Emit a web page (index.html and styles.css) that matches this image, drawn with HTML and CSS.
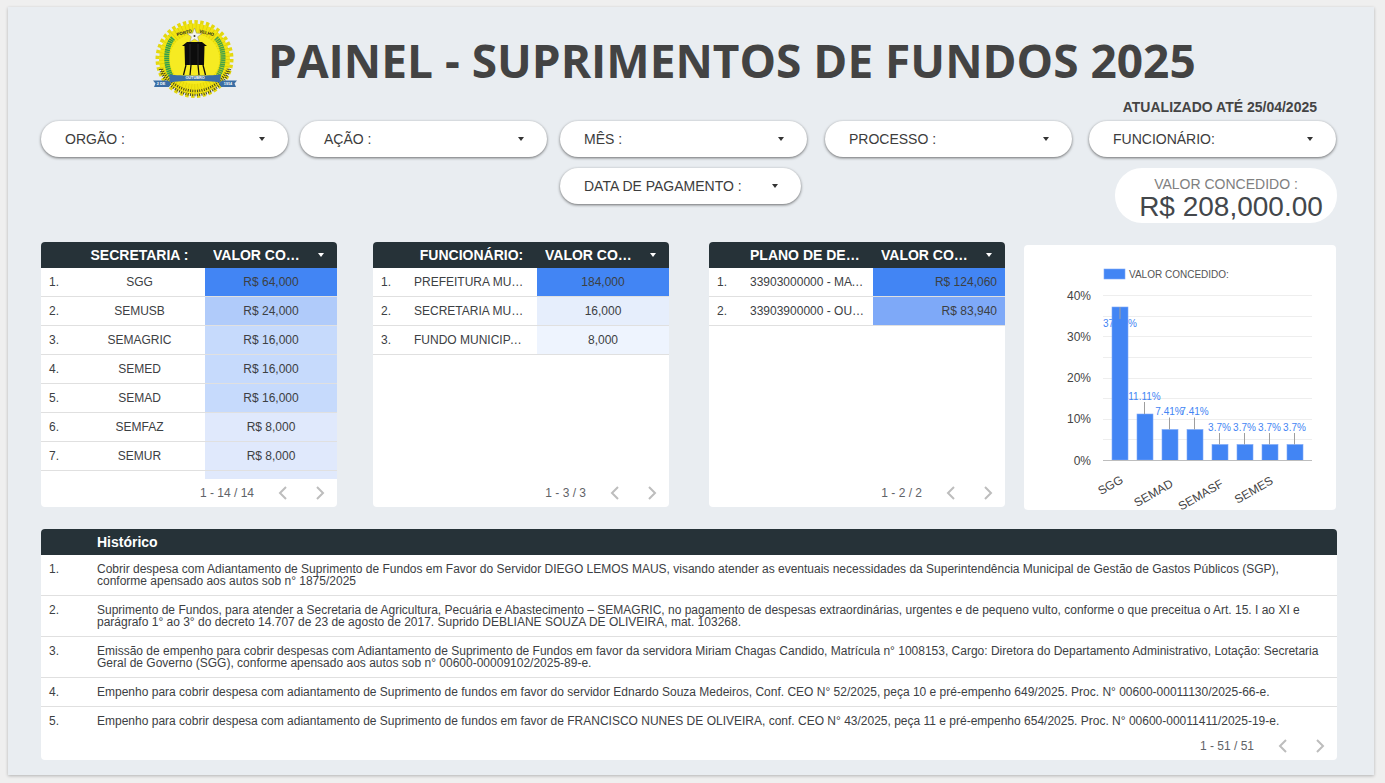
FILE: index.html
```html
<!DOCTYPE html>
<html lang="pt-BR">
<head>
<meta charset="utf-8">
<title>Painel - Suprimentos de Fundos 2025</title>
<link rel="stylesheet" href="styles.css">
</head>
<body>
<main class="canvas">
  <header class="masthead">
    <svg class="logo" viewBox="0 0 84 80" role="img" aria-label="Brasão de Porto Velho">
      <circle cx="41.5" cy="40" r="37" fill="none" stroke="#e4d80f" stroke-width="4" stroke-dasharray="3.4 2.4"/>
      <circle cx="41.5" cy="40" r="35.5" fill="#f2e511"/>
      <circle cx="41.5" cy="40" r="29" fill="none" stroke="#d9cc0c" stroke-width="13" stroke-dasharray="0.6 2.6"/>
      <circle cx="41.5" cy="40" r="25" fill="#f6eb22"/>
      <path class="wreath" d="M20 19 C12 28 12 46 18 57"/>
      <path class="wreath wreath-right" d="M63 19 C72 28 72 46 65 57"/>
      <path class="rails" d="M7 50 C13 67 28 76 42 76 C56 76 71 67 77 50"/>
      <path class="rails" d="M9 50 C15 63 28 72 42 72 C56 72 69 63 75 50"/>
      <text class="logo-arc" transform="translate(24 17) rotate(-14)">PORTO</text>
      <text class="logo-arc" transform="translate(46 13.5) rotate(14)">VELHO</text>
      <path d="M41.5 9 L43.4 14.2 L49 14.4 L44.6 17.8 L46.2 23 L41.5 20 L36.8 23 L38.4 17.8 L34 14.4 L39.6 14.2 Z" fill="#f4f4ee" stroke="#777" stroke-width=".4"/>
      <circle cx="41.5" cy="17" r="1" fill="#333"/>
      <path d="M29 27 L34 23 H49 L54 27 H51.5 L51 46 H32 L31.5 27 Z" fill="#0c0c0c"/>
      <path d="M37 25 V46 M45 25 V46" stroke="#3a3a3a" stroke-width=".6"/>
      <path d="M33 46 L30.5 56 M38 46 L37 56 M45 46 L46 56 M50 46 L52.5 56" stroke="#0c0c0c" stroke-width="1.3"/>
      <path class="ribbon" d="M0 61.500 H15 L18 64 L16 68 H1 L2.500 64.500 Z"/>
      <path class="ribbon" d="M84 61.500 H69 L66 64 L68 68 H83 L81.500 64.500 Z"/>
      <path class="ribbon" d="M16 55.500 C28 57 55 57 68 55.500 L67 63.500 C55 61 28 61 17 63.500 Z"/>
      <text class="logo-band" x="42" y="60">OUTUBRO</text>
      <text class="logo-band" x="8" y="66.200">2 DE</text>
      <text class="logo-band" x="75" y="66.200">1914</text>
    </svg>
    <h1 class="title">PAINEL - SUPRIMENTOS DE FUNDOS 2025</h1>
  </header>

  <p class="updated">ATUALIZADO ATÉ 25/04/2025</p>

  <section class="filters">
    <div class="filter"><span>ORGÃO :</span><i class="caret"></i></div>
    <div class="filter"><span>AÇÃO :</span><i class="caret"></i></div>
    <div class="filter"><span>MÊS :</span><i class="caret"></i></div>
    <div class="filter"><span>PROCESSO :</span><i class="caret"></i></div>
    <div class="filter"><span>FUNCIONÁRIO:</span><i class="caret"></i></div>
    <div class="filter filter-date"><span>DATA DE PAGAMENTO :</span><i class="caret"></i></div>
    <div class="score">
      <div class="score-label">VALOR CONCEDIDO :</div>
      <div class="score-value">R$ 208,000.00</div>
    </div>
  </section>

  <section class="panels">
    <article class="card table-card">
      <div class="row head">
        <div></div><div class="dim center">SECRETARIA :</div>
        <div class="val"><span class="val-title">VALOR CONCEDIDO</span><i class="caret caret-light"></i></div>
      </div>
      <div class="body">
        <div class="row"><div class="rank">1.</div><div class="dim center">SGG</div><div class="val center heat-100">R$ 64,000</div></div>
        <div class="row"><div class="rank">2.</div><div class="dim center">SEMUSB</div><div class="val center heat-38">R$ 24,000</div></div>
        <div class="row"><div class="rank">3.</div><div class="dim center">SEMAGRIC</div><div class="val center heat-25">R$ 16,000</div></div>
        <div class="row"><div class="rank">4.</div><div class="dim center">SEMED</div><div class="val center heat-25">R$ 16,000</div></div>
        <div class="row"><div class="rank">5.</div><div class="dim center">SEMAD</div><div class="val center heat-25">R$ 16,000</div></div>
        <div class="row"><div class="rank">6.</div><div class="dim center">SEMFAZ</div><div class="val center heat-12">R$ 8,000</div></div>
        <div class="row"><div class="rank">7.</div><div class="dim center">SEMUR</div><div class="val center heat-12">R$ 8,000</div></div>
        <div class="row row-clipped"><div class="rank"></div><div class="dim center"></div><div class="val center heat-12"></div></div>
      </div>
      <footer class="pager"><span>1 - 14 / 14</span>
        <svg class="chev" viewBox="0 0 10 14"><path d="M8 1 L2 7 L8 13"/></svg>
        <svg class="chev" viewBox="0 0 10 14"><path d="M2 1 L8 7 L2 13"/></svg>
      </footer>
    </article>

    <article class="card table-card">
      <div class="row head">
        <div></div><div class="dim center">FUNCIONÁRIO:</div>
        <div class="val"><span class="val-title">VALOR CONCEDIDO</span><i class="caret caret-light"></i></div>
      </div>
      <div class="body">
        <div class="row"><div class="rank">1.</div><div class="dim">PREFEITURA MUNICIPAL</div><div class="val center heat-100">184,000</div></div>
        <div class="row"><div class="rank">2.</div><div class="dim">SECRETARIA MUNICIPAL</div><div class="val center heat-9">16,000</div></div>
        <div class="row"><div class="rank">3.</div><div class="dim">FUNDO MUNICIPAL DE SAÚDE</div><div class="val center heat-4">8,000</div></div>
      </div>
      <footer class="pager"><span>1 - 3 / 3</span>
        <svg class="chev" viewBox="0 0 10 14"><path d="M8 1 L2 7 L8 13"/></svg>
        <svg class="chev" viewBox="0 0 10 14"><path d="M2 1 L8 7 L2 13"/></svg>
      </footer>
    </article>

    <article class="card table-card">
      <div class="row head">
        <div></div><div class="dim">PLANO DE DESPESA</div>
        <div class="val"><span class="val-title">VALOR CONCEDIDO</span><i class="caret caret-light"></i></div>
      </div>
      <div class="body">
        <div class="row"><div class="rank">1.</div><div class="dim">33903000000 - MATERIAL</div><div class="val end heat-100">R$ 124,060</div></div>
        <div class="row"><div class="rank">2.</div><div class="dim">33903900000 - OUTROS</div><div class="val end heat-68">R$ 83,940</div></div>
      </div>
      <footer class="pager"><span>1 - 2 / 2</span>
        <svg class="chev" viewBox="0 0 10 14"><path d="M8 1 L2 7 L8 13"/></svg>
        <svg class="chev" viewBox="0 0 10 14"><path d="M2 1 L8 7 L2 13"/></svg>
      </footer>
    </article>

    <article class="card chart-card">
      <svg class="chart" viewBox="1024 245 312 265" role="img" aria-label="Valor concedido por secretaria">
        <rect class="bar" x="1104" y="269" width="21" height="10"/>
        <text class="legend" x="1129" y="277.5">VALOR CONCEDIDO:</text>
        <path class="grid" d="M1103 295.5H1312M1103 316.5H1312M1103 336.5H1312M1103 357.5H1312M1103 378.5H1312M1103 398.5H1312M1103 419.5H1312M1103 439.5H1312"/>
        <text class="y-tick" x="1091" y="300">40%</text>
        <text class="y-tick" x="1091" y="341">30%</text>
        <text class="y-tick" x="1091" y="382">20%</text>
        <text class="y-tick" x="1091" y="423">10%</text>
        <text class="y-tick" x="1091" y="465">0%</text>
        <text class="bar-label" x="1120" y="327">37.04%</text>
        <rect class="bar" x="1112" y="307" width="16" height="153"/>
        <rect class="bar" x="1137" y="414" width="16" height="46"/>
        <rect class="bar" x="1162" y="429.5" width="16" height="31"/>
        <rect class="bar" x="1187" y="429.5" width="16" height="31"/>
        <rect class="bar" x="1212" y="444.5" width="16" height="16"/>
        <rect class="bar" x="1237" y="444.5" width="16" height="16"/>
        <rect class="bar" x="1262" y="444.5" width="16" height="16"/>
        <rect class="bar" x="1287" y="444.5" width="16" height="16"/>
        <path class="leader" d="M1120 307V319M1144.5 402V414M1169.5 417.5V429.5M1194.5 417.5V429.5M1219.5 433V444.5M1244.5 433V444.5M1269.5 433V444.5M1294.5 433V444.5"/>
        <text class="bar-label" x="1144.5" y="400">11.11%</text>
        <text class="bar-label" x="1169.5" y="415">7.41%</text>
        <text class="bar-label" x="1194.5" y="415">7.41%</text>
        <text class="bar-label" x="1219.5" y="431">3.7%</text>
        <text class="bar-label" x="1244.5" y="431">3.7%</text>
        <text class="bar-label" x="1269.5" y="431">3.7%</text>
        <text class="bar-label" x="1294.5" y="431">3.7%</text>
        <path class="axis" d="M1103 460.5H1312"/>
        <text class="x-tick" transform="translate(1124 482) rotate(-30)">SGG</text>
        <text class="x-tick" transform="translate(1174 486) rotate(-30)">SEMAD</text>
        <text class="x-tick" transform="translate(1224 486) rotate(-30)">SEMASF</text>
        <text class="x-tick" transform="translate(1274 483) rotate(-30)">SEMES</text>
      </svg>
    </article>
  </section>

  <section class="card history">
    <div class="h-row h-head"><div></div><div>Histórico</div></div>
    <div class="h-body">
      <div class="h-row"><div>1.</div><div>Cobrir despesa com Adiantamento de Suprimento de Fundos em Favor do Servidor DIEGO LEMOS MAUS, visando atender as eventuais necessidades da Superintendência Municipal de Gestão de Gastos Públicos (SGP), conforme apensado aos autos sob n° 1875/2025</div></div>
      <div class="h-row"><div>2.</div><div>Suprimento de Fundos, para atender a Secretaria de Agricultura, Pecuária e Abastecimento – SEMAGRIC, no pagamento de despesas extraordinárias, urgentes e de pequeno vulto, conforme o que preceitua o Art. 15. I ao XI e parágrafo 1° ao 3° do decreto 14.707 de 23 de agosto de 2017. Suprido DEBLIANE SOUZA DE OLIVEIRA, mat. 103268.</div></div>
      <div class="h-row"><div>3.</div><div>Emissão de empenho para cobrir despesas com Adiantamento de Suprimento de Fundos em favor da servidora Miriam Chagas Candido, Matrícula n° 1008153, Cargo: Diretora do Departamento Administrativo, Lotação: Secretaria Geral de Governo (SGG), conforme apensado aos autos sob n° 00600-00009102/2025-89-e.</div></div>
      <div class="h-row"><div>4.</div><div>Empenho para cobrir despesa com adiantamento de Suprimento de fundos em favor do servidor Ednardo Souza Medeiros, Conf. CEO N° 52/2025, peça 10 e pré-empenho 649/2025. Proc. N° 00600-00011130/2025-66-e.</div></div>
      <div class="h-row h-row-last"><div>5.</div><div>Empenho para cobrir despesa com adiantamento de Suprimento de fundos em favor de FRANCISCO NUNES DE OLIVEIRA, conf. CEO N° 43/2025, peça 11 e pré-empenho 654/2025. Proc. N° 00600-00011411/2025-19-e.</div></div>
    </div>
    <footer class="pager"><span>1 - 51 / 51</span>
      <svg class="chev" viewBox="0 0 10 14"><path d="M8 1 L2 7 L8 13"/></svg>
      <svg class="chev" viewBox="0 0 10 14"><path d="M2 1 L8 7 L2 13"/></svg>
    </footer>
  </section>
</main>
</body>
</html>
```

FILE: styles.css
```css
* { box-sizing: border-box; }
html, body { margin: 0; height: 100%; overflow: hidden; }
body {
  background: #efefef;
  font-family: "Liberation Sans", Arial, sans-serif;
  color: #3c4043;
}
.canvas {
  width: 1366px;
  height: 768px;
  margin: 7px 0 0 8px;
  padding: 12px 37px 0 33px;
  background: #e9edf1;
  box-shadow: 0 1px 3px rgba(0, 0, 0, .25);
}

/* Masthead */
.masthead {
  display: flex;
  align-items: center;
  height: 79px;
  padding-left: 112px;
}
.logo { width: 84px; height: 80px; flex: none; }
.title {
  margin: 2px 0 0 31px;
  font-family: "Open Sans", sans-serif;
  font-size: 46px;
  font-weight: 700;
  line-height: 1;
  white-space: nowrap;
  color: #434343;
}
.wreath { fill: none; stroke: #2f9e4f; stroke-width: 5; stroke-dasharray: 1.6 .5; }
.wreath-right { stroke: #45a24a; }
.rails { fill: none; stroke: #3b3a1c; stroke-width: 2.6; stroke-dasharray: .9 1.4; }
.ribbon { fill: #3a6ea5; }
.logo-arc { font-size: 4.4px; font-weight: 700; fill: #222; }
.logo-band { font-size: 3.8px; font-weight: 700; fill: #fff; text-anchor: middle; }

.updated {
  margin: 1px 20px 0 0;
  height: 22px;
  font-size: 14px;
  font-weight: 700;
  line-height: 16px;
  text-align: right;
  color: #444;
}

/* Filters */
.filters {
  display: grid;
  grid-template-columns: 259px 260px 265px 264px 248px;
  grid-template-rows: 36px 55px;
  row-gap: 11px;
  align-items: start;
}
.filter {
  display: flex;
  align-items: center;
  justify-content: space-between;
  width: 247px;
  height: 36px;
  padding: 0 23px 0 24px;
  background: #fff;
  border-radius: 18px;
  box-shadow: 0 1px 3px rgba(0, 0, 0, .55);
  font-size: 14px;
  color: #3c3c3c;
}
.filter-date { grid-column: 3; width: 241px; }
.caret {
  width: 0;
  height: 0;
  border-left: 3.5px solid transparent;
  border-right: 3.5px solid transparent;
  border-top: 4px solid #333;
  flex: none;
}
.caret-light { border-top-color: #fff; }
.score {
  grid-column: 5;
  justify-self: end;
  width: 222px;
  height: 55px;
  padding-top: 8px;
  background: #fff;
  border-radius: 27px;
  text-align: center;
  overflow: hidden;
}
.score-label { font-size: 14px; line-height: 16px; color: #808080; }
.score-value {
  padding-left: 10px;
  font-size: 28px;
  line-height: 30px;
  white-space: nowrap;
  color: #43474b;
}

/* Panels */
.panels {
  display: grid;
  grid-template-columns: 332px 336px 315px 312px;
  margin-top: 19px;
  align-items: start;
}
.card { background: #fff; border-radius: 4px; overflow: hidden; }
.table-card {
  display: flex;
  flex-direction: column;
  width: 296px;
  height: 265px;
  font-size: 12px;
}
.row {
  display: grid;
  grid-template-columns: 33px 131px 132px;
  height: 29px;
  border-bottom: 1px solid #e0e0e0;
  align-items: stretch;
}
.row > div { display: flex; align-items: center; min-width: 0; }
.rank { padding-left: 8px; }
.dim { padding: 0 8px; }
.row > .dim {
  display: block;
  line-height: 28px;
  white-space: nowrap;
  overflow: hidden;
  text-overflow: ellipsis;
}
.row > .dim.center { text-align: center; }
.val { padding: 0 8px; }
.val.center { justify-content: center; }
.val.end { justify-content: flex-end; }
.head {
  height: 26px;
  flex: none;
  border-bottom: 0;
  background: #263238;
  color: #fff;
  font-size: 14px;
  font-weight: 700;
}
.head > .dim { line-height: 26px; }
.head .val { gap: 12px; padding-right: 13px; }
.val-title {
  flex: 1;
  min-width: 0;
  white-space: nowrap;
  overflow: hidden;
  text-overflow: ellipsis;
}
.body { height: 211px; flex: none; overflow: hidden; }
.heat-100 { background: #4285f4; }
.heat-68 { background: #7ea9f8; }
.heat-38 { background: #b0cbfa; }
.heat-25 { background: #c6dafc; }
.heat-12 { background: #e0e9fc; }
.heat-9 { background: #e6eefc; }
.heat-4 { background: #eef4fe; }

.pager {
  display: flex;
  align-items: center;
  justify-content: flex-end;
  flex: none;
  height: 28px;
  padding-right: 12px;
  font-size: 12px;
  color: #5f6368;
}
.pager span { margin-right: 24px; }
.chev { width: 10px; height: 14px; fill: none; stroke: #bdbdbd; stroke-width: 2; }
.chev + .chev { margin-left: 27px; }

/* Chart */
.chart-card { width: 312px; height: 265px; margin-top: 3px; }
.chart { display: block; width: 312px; height: 265px; font-family: "Liberation Sans", Arial, sans-serif; }
.bar { fill: #4285f4; stroke: #7ea9f8; stroke-width: .6; }
.legend { font-size: 10px; fill: #555; }
.grid { fill: none; stroke: #eeeeee; stroke-width: 1; }
.axis { fill: none; stroke: #bdbdbd; stroke-width: 1; }
.leader { fill: none; stroke: #9e9e9e; stroke-width: 1; }
.y-tick { font-size: 12px; fill: #444; text-anchor: end; }
.x-tick { font-size: 12px; fill: #444; text-anchor: end; }
.bar-label { font-size: 10px; fill: #4285f4; text-anchor: middle; }

/* History */
.history {
  display: flex;
  flex-direction: column;
  width: 1296px;
  height: 231px;
  margin-top: 19px;
  font-size: 12px;
}
.h-row {
  display: grid;
  grid-template-columns: 48px 1fr;
  padding: 8px;
  line-height: 12px;
  border-bottom: 1px solid #e0e0e0;
}
.h-row-last { border-bottom: 0; }
.h-head {
  height: 26px;
  flex: none;
  padding-top: 0;
  padding-bottom: 0;
  align-items: center;
  border-bottom: 0;
  background: #263238;
  color: #fff;
  font-size: 14px;
  font-weight: 700;
}
.h-body { height: 177px; flex: none; overflow: hidden; }
```
